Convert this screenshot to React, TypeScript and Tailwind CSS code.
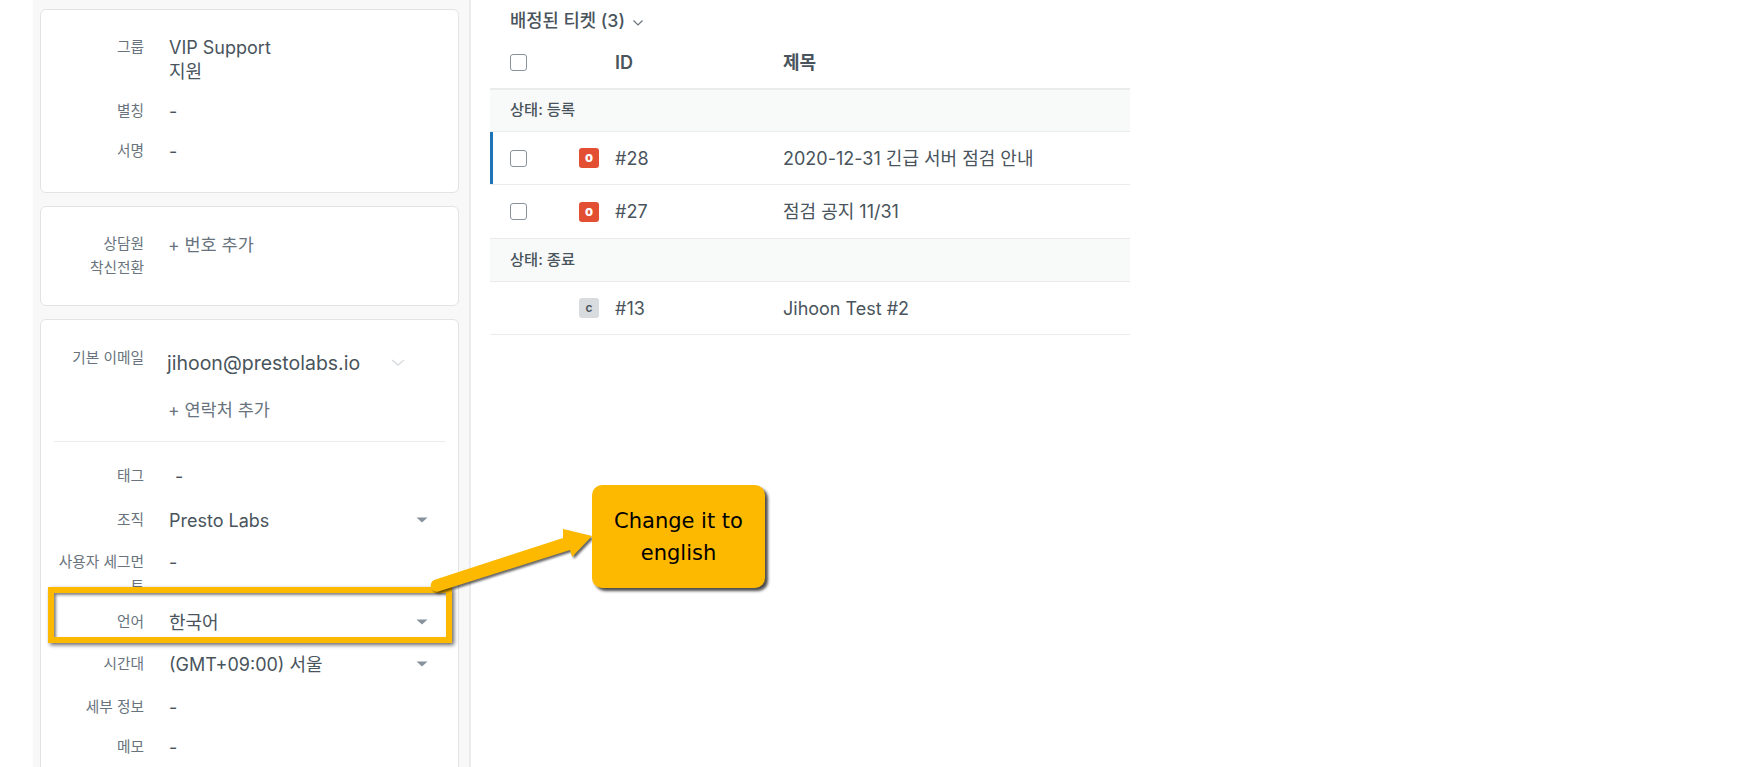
import type { ReactNode } from 'react';

const sans = "font-['Inter','Noto_Sans_CJK_KR',sans-serif]";

const Caret = () => (
  <svg width="12" height="6" viewBox="0 0 12 6" className="absolute right-[30px] top-[9px]">
    <path d="M0.5 0.5h11L6 5.5z" fill="#87929d" />
  </svg>
);

const Row = ({ label, h, children, caret, clip }: { label?: ReactNode; h: string; children?: ReactNode; caret?: boolean; clip?: boolean }) => (
  <div className={`relative flex ${h} ${clip ? 'overflow-hidden' : ''}`}>
    <div className="ml-[13px] w-[90px] shrink-0 break-all text-right text-[14.7px] leading-6 text-[#68737d]">{label}</div>
    <div className="ml-[25px] flex-1 pt-px text-[18px] leading-6 text-[#49545c]">{children}</div>
    {caret && <Caret />}
  </div>
);

const Card = ({ className, children }: { className: string; children: ReactNode }) => (
  <section className={`w-[419px] rounded-md border border-[#e1e3e5] bg-white ${className}`}>{children}</section>
);

const Checkbox = () => <span className="block size-[17px] rounded-[3px] border border-[#87929d] bg-white" />;

const GroupRow = ({ label, h }: { label: string; h: string }) => (
  <div className={`flex ${h} items-center border-b border-[#e9ebed] bg-[#f8f9f9] pl-5 text-[15.3px] font-medium text-[#49545c]`}>{label}</div>
);

const TicketRow = ({ id, title, status, h, check, active }: { id: string; title: string; status: 'o' | 'c'; h: string; check?: boolean; active?: boolean }) => (
  <div className={`relative flex ${h} items-center border-b border-[#e9ebed] pl-5 text-[18px] text-[#49545c]`}>
    {active && <span className="absolute bottom-0 left-0 top-0 w-[3px] bg-[#1f73b7]" />}
    <div className="w-[69px]">{check && <Checkbox />}</div>
    <div className="w-[36px]">
      <span className={`flex h-5 w-5 items-center justify-center rounded-[3px] ${status === 'o' ? 'bg-[#e34f32] text-[13px] font-extrabold text-white' : 'bg-[#d8dcde] text-[12px] font-semibold text-[#49545c]'}`}>{status}</span>
    </div>
    <div className="w-[168px]">{id}</div>
    <div>{title}</div>
  </div>
);

export default function App() {
  return (
    <div className={`relative flex h-[767px] overflow-hidden bg-white ${sans}`}>
      <div className="w-[33px] shrink-0" />
      <aside className="w-[438px] shrink-0 border-r-2 border-[#e9ebed] bg-[#f8f8f8] pl-[7px] pt-[9px]">
        <Card className="h-[184px] pt-[25px]">
          <Row label="그룹" h="h-[64px]">
            VIP Support<br />지원
          </Row>
          <Row label="별칭" h="h-[40px]">-</Row>
          <Row label="서명" h="h-[24px]">-</Row>
        </Card>
        <Card className="mt-[13px] h-[100px] pt-[25px]">
          <Row label={<>상담원<br />착신전환</>} h="h-12">
            <span className="-ml-px text-[17.5px] text-[#68737d]">+ 번호 추가</span>
          </Row>
        </Card>
        <Card className="mt-[13px] h-[600px] pt-[26px]">
          <Row label="기본 이메일" h="h-[51px]">
            <div className="relative -ml-[2px] pt-[4px] text-[19.5px]">
              jihoon@prestolabs.io
              <svg width="14" height="8" viewBox="0 0 14 8" className="absolute left-[224px] top-[12px]" fill="none" stroke="#d8dcde" strokeWidth="1.5"><path d="M1 1l6 5 6-5" /></svg>
            </div>
          </Row>
          <Row h="h-6"><span className="-ml-px text-[17.5px] text-[#68737d]">+ 연락처 추가</span></Row>
          <div className="mx-[13px] mb-[22px] mt-[20px] border-t border-[#e9ebed]" />
          <Row label="태그" h="h-[44px]"><span className="ml-[6px]">-</span></Row>
          <Row label="조직" h="h-[42px]" caret>Presto Labs</Row>
          <Row label="사용자 세그먼트" h="mb-[23px] h-[37px]" clip>-</Row>
          <Row label="언어" h="h-[42px]" caret>한국어</Row>
          <Row label="시간대" h="h-[43px]" caret>(GMT+09:00) 서울</Row>
          <Row label="세부 정보" h="h-[40px]">-</Row>
          <Row label="메모" h="h-6">-</Row>
        </Card>
      </aside>

      <main className="ml-[19px] w-[640px] shrink-0">
        <div className="flex h-10 items-center pl-5 pt-[3px] text-[17.7px] font-medium text-[#49545c]">
          배정된 티켓 (3)
          <svg width="12" height="8" viewBox="0 0 12 8" className="ml-[7px] mt-[3px]" fill="none" stroke="#68737d" strokeWidth="1.2"><path d="M1.5 1.5L6 6l4.5-4.5" /></svg>
        </div>
        <div className="flex h-[50px] items-center border-b-2 border-[#e9ebed] pb-[4px] pl-5 text-[18px] font-semibold text-[#49545c]">
          <div className="w-[105px]"><Checkbox /></div>
          <div className="w-[168px]">ID</div>
          <div>제목</div>
        </div>
        <GroupRow label="상태: 등록" h="h-[42px]" />
        <TicketRow id="#28" title="2020-12-31 긴급 서버 점검 안내" status="o" h="h-[53px]" check active />
        <TicketRow id="#27" title="점검 공지 11/31" status="o" h="h-[54px]" check />
        <GroupRow label="상태: 종료" h="h-[43px]" />
        <TicketRow id="#13" title="Jihoon Test #2" status="c" h="h-[53px]" />
      </main>

      {/* annotation overlay */}
      <div className="pointer-events-none absolute left-[48px] top-[587px] h-[56px] w-[404px] border-[6px] border-[#fdb900] shadow-[2px_2px_4px_rgba(0,0,0,0.6),inset_2px_2px_3px_rgba(0,0,0,0.5)]" />
      <svg width="180" height="80" viewBox="0 0 180 80" className="absolute left-[425px] top-[520px] drop-shadow-[2px_2px_1px_rgba(0,0,0,0.6)]">
        <path d="M9 60L138 18L138 9L167 16L147 37L145 30L15 71A6 6 0 0 1 9 60Z" fill="#fdb900" />
      </svg>
      <div className="absolute left-[592px] top-[485px] flex h-[103px] w-[173px] items-center justify-center rounded-[10px] bg-[#fdb900] text-center font-['DejaVu_Sans',sans-serif] text-[21px] leading-[32px] text-black shadow-[3px_3px_3px_rgba(0,0,0,0.7)]">
        Change it to<br />english
      </div>
    </div>
  );
}
